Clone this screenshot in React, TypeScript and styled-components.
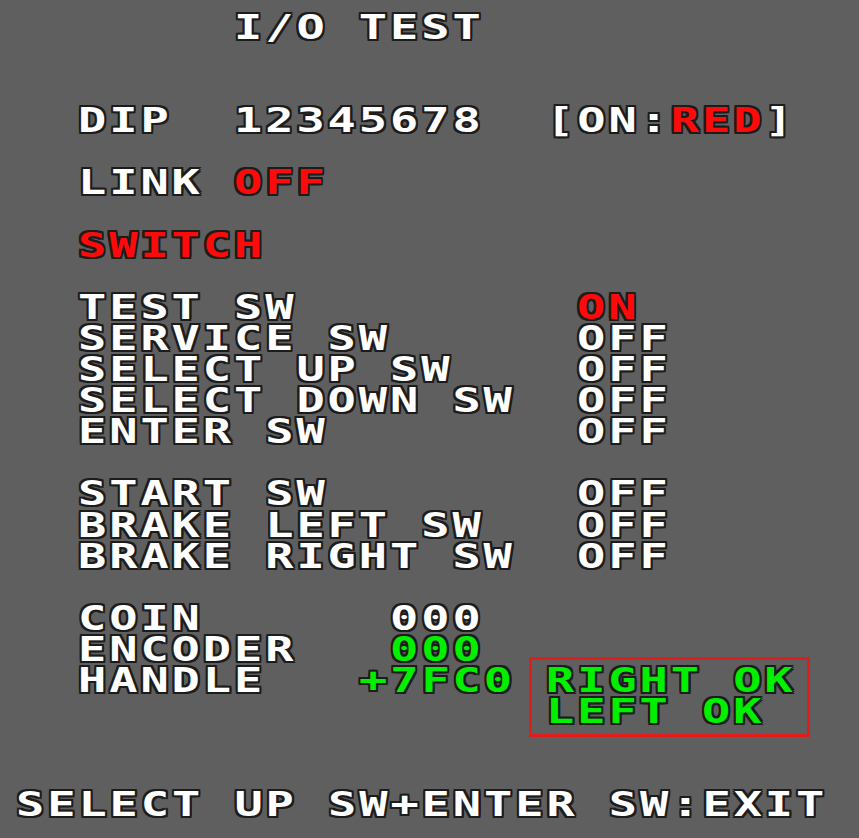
import React from "react";
import styled, { createGlobalStyle } from "styled-components";

const Global = createGlobalStyle`
  html, body {
    margin: 0;
    padding: 0;
    background: #5f5f5f;
    overflow: hidden;
  }
`;

const Screen = styled.div`
  display: grid;
  grid-template-columns: repeat(27, 31.2px);
  grid-template-rows: repeat(27, 31.1px);
  padding: 12px 0 0 16px;
  width: 859px;
  height: 838px;
  box-sizing: border-box;
  overflow: hidden;
  background: #5f5f5f;
`;

const outline = "#1c1c1c";

const Text = styled.div<{ $row: number; $col: number; $color?: string }>`
  grid-row: ${(p) => p.$row + 1};
  grid-column: ${(p) => p.$col + 1};
  white-space: pre;
  font-family: "DejaVu Sans Mono", "Liberation Mono", monospace;
  font-weight: bold;
  font-size: 34px;
  line-height: 31.1px;
  letter-spacing: 2.14px;
  transform: scaleX(1.38);
  transform-origin: left center;
  color: ${(p) => p.$color ?? "#ffffff"};
  text-shadow:
    1.5px 0 ${outline}, -1.5px 0 ${outline}, 0 2px ${outline}, 0 -2px ${outline},
    1.5px 2px ${outline}, -1.5px 2px ${outline}, 1.5px -2px ${outline}, -1.5px -2px ${outline};
`;

const Red = styled.span`
  color: #ff0a0a;
`;

const Frame = styled.div`
  grid-row: 22 / span 2;
  grid-column: 18 / span 8;
  margin: -8px -14px -10px -17px;
  border: 3px solid #e01c1c;
`;

const WHITE = "#ffffff";
const RED = "#ff0a0a";
const GREEN = "#00f000";

const switches: [number, string, string, string][] = [
  [9, "TEST SW", "ON", RED],
  [10, "SERVICE SW", "OFF", WHITE],
  [11, "SELECT UP SW", "OFF", WHITE],
  [12, "SELECT DOWN SW", "OFF", WHITE],
  [13, "ENTER SW", "OFF", WHITE],
  [15, "START SW", "OFF", WHITE],
  [16, "BRAKE LEFT SW", "OFF", WHITE],
  [17, "BRAKE RIGHT SW", "OFF", WHITE],
];

export default function App() {
  return (
    <>
      <Global />
      <Screen>
        <Text $row={0} $col={7}>I/O TEST</Text>

        <Text $row={3} $col={2}>DIP</Text>
        <Text $row={3} $col={7}>12345678</Text>
        <Text $row={3} $col={17}>
          [ON:<Red>RED</Red>]
        </Text>

        <Text $row={5} $col={2}>
          LINK <Red>OFF</Red>
        </Text>

        <Text $row={7} $col={2} $color={RED}>SWITCH</Text>

        {switches.map(([row, label, state, color]) => (
          <React.Fragment key={label}>
            <Text $row={row} $col={2}>{label}</Text>
            <Text $row={row} $col={18} $color={color}>{state}</Text>
          </React.Fragment>
        ))}

        <Text $row={19} $col={2}>COIN</Text>
        <Text $row={19} $col={12}>000</Text>
        <Text $row={20} $col={2}>ENCODER</Text>
        <Text $row={20} $col={12} $color={GREEN}>000</Text>
        <Text $row={21} $col={2}>HANDLE</Text>
        <Text $row={21} $col={11} $color={GREEN}>+7FC0</Text>

        <Frame />
        <Text $row={21} $col={17} $color={GREEN}>RIGHT OK</Text>
        <Text $row={22} $col={17} $color={GREEN}>LEFT OK</Text>

        <Text $row={25} $col={0}>SELECT UP SW+ENTER SW:EXIT</Text>
      </Screen>
    </>
  );
}
